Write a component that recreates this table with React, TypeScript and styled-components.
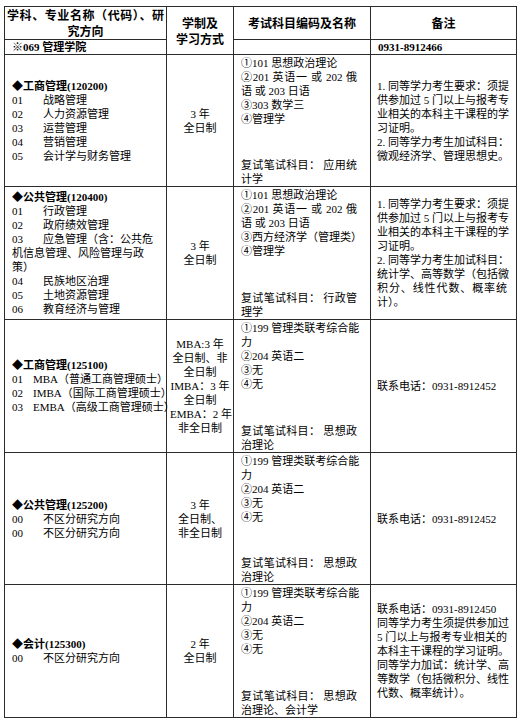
import React from 'react';
import styled, { createGlobalStyle } from 'styled-components';

const Global = createGlobalStyle`
  html, body { margin: 0; padding: 0; background: #fff; }
  body {
    font-family: "Liberation Serif", "Noto Sans CJK SC", serif;
    color: #000;
  }
`;

const Page = styled.div`
  padding: 6px 0 0 4px;
`;

const Table = styled.table`
  border-collapse: collapse;
  table-layout: fixed;
  width: 512px;
  font-size: 11px;
  line-height: 14px;
`;

const Row = styled.tr<{ $h: number }>`
  height: ${(p) => p.$h}px;
`;

const border = '1px solid #2b2b2b';

const HeadCell = styled.th`
  border: ${border};
  padding: 0 2px;
  font-size: 12px;
  line-height: 16px;
  font-weight: bold;
  text-align: center;
  vertical-align: middle;
  font-family: "Noto Sans CJK SC", sans-serif;
`;

const SubHeadCell = styled.td`
  border: ${border};
  padding: 0 6px 0 7px;
  font-weight: bold;
  font-size: 11px;
  line-height: 13px;
  vertical-align: middle;
  white-space: nowrap;
`;

const NameCell = styled.td`
  border: ${border};
  padding: 0 4px 0 7px;
  vertical-align: middle;
`;

const ModeCell = styled.td`
  border: ${border};
  padding: 0 3px;
  text-align: center;
  vertical-align: middle;
`;

const ExamCell = styled.td`
  border: ${border};
  padding: 0 13px 0 7px;
  vertical-align: top;
`;

const NoteCell = styled.td`
  border: ${border};
  padding: 0 9px 0 6px;
  vertical-align: middle;
`;

const ExamStack = styled.div<{ $h: number }>`
  height: ${(p) => p.$h}px;
  display: flex;
  flex-direction: column;
  justify-content: space-between;
  padding-top: 1px;
  box-sizing: border-box;
`;

const Line = styled.div<{ $j?: boolean }>`
  white-space: nowrap;
  text-align: left;
  text-align-last: ${(p) => (p.$j ? 'justify' : 'auto')};
`;

const HeadLine = styled.div<{ $j?: boolean }>`
  white-space: nowrap;
  text-align-last: ${(p) => (p.$j ? 'justify' : 'center')};
`;

const Title = styled.div`
  font-weight: bold;
  white-space: nowrap;
`;

const Entry = styled.div`
  white-space: nowrap;
`;

const Code = styled.span<{ $w: number }>`
  display: inline-block;
  width: ${(p) => p.$w}px;
`;

const CenterLine = styled.div`
  white-space: nowrap;
`;

type L = string | { t: string; j: true };
const J = (t: string): L => ({ t, j: true });

type Prog = {
  h: number;
  title: string;
  codeW: number;
  items: ([string, string] | string)[];
  mode: string[];
  top: L[];
  bottom: L[];
  note: L[];
};

const examA: L[] = ['①101 思想政治理论', J('②201 英语一 或 202 俄'), '语 或 203 日语'];
const examB: L[] = [J('①199 管理类联考综合能'), '力', '②204 英语二', '③无', '④无'];
const noteA: L[] = [
  J('1. 同等学力考生要求：须提'),
  J('供参加过 5 门以上与报考专'),
  J('业相关的本科主干课程的学'),
  '习证明。',
  '2. 同等学力考生加试科目：',
];

const progs: Prog[] = [
  {
    h: 132,
    title: '◆工商管理(120200)',
    codeW: 31,
    items: [
      ['01', '战略管理'],
      ['02', '人力资源管理'],
      ['03', '运营管理'],
      ['04', '营销管理'],
      ['05', '会计学与财务管理'],
    ],
    mode: ['3 年', '全日制'],
    top: [...examA, '③303 数学三', '④管理学'],
    bottom: [J('复试笔试科目：  应用统'), '计学'],
    note: [...noteA, '微观经济学、管理思想史。'],
  },
  {
    h: 133,
    title: '◆公共管理(120400)',
    codeW: 31,
    items: [
      ['01', '行政管理'],
      ['02', '政府绩效管理'],
      ['03', '应急管理（含：公共危'],
      '机信息管理、风险管理与政',
      '策）',
      ['04', '民族地区治理'],
      ['05', '土地资源管理'],
      ['06', '教育经济与管理'],
    ],
    mode: ['3 年', '全日制'],
    top: [...examA, '③西方经济学（管理类）', '④管理学'],
    bottom: [J('复试笔试科目：  行政管'), '理学'],
    note: [...noteA, J('统计学、高等数学（包括微'), J('积分、线性代数、概率统'), '计）。'],
  },
  {
    h: 133,
    title: '◆工商管理(125100)',
    codeW: 21,
    items: [
      ['01', 'MBA（普通工商管理硕士）'],
      ['02', 'IMBA（国际工商管理硕士）'],
      ['03', 'EMBA（高级工商管理硕士）'],
    ],
    mode: ['MBA:3 年', '全日制、非', '全日制', 'IMBA：3 年', '全日制', 'EMBA：2 年', '非全日制'],
    top: examB,
    bottom: [J('复试笔试科目：  思想政'), '治理论'],
    note: ['联系电话：0931-8912452'],
  },
  {
    h: 132,
    title: '◆公共管理(125200)',
    codeW: 31,
    items: [
      ['00', '不区分研究方向'],
      ['00', '不区分研究方向'],
    ],
    mode: ['3 年', '全日制、', '非全日制'],
    top: examB,
    bottom: [J('复试笔试科目：  思想政'), '治理论'],
    note: ['联系电话：0931-8912452'],
  },
  {
    h: 133,
    title: '◆会计(125300)',
    codeW: 31,
    items: [['00', '不区分研究方向']],
    mode: ['2 年', '全日制'],
    top: examB,
    bottom: [J('复试笔试科目：  思想政'), '治理论、会计学'],
    note: [
      '联系电话：0931-8912450',
      J('同等学力考生须提供参加过'),
      J('5 门以上与报考专业相关的'),
      J('本科主干课程的学习证明。'),
      J('同等学力加试：统计学、高'),
      J('等数学（包括微积分、线性'),
      '代数、概率统计）。',
    ],
  },
];

const renderLines = (lines: L[]) =>
  lines.map((l, i) =>
    typeof l === 'string' ? (
      <Line key={i}>{l}</Line>
    ) : (
      <Line key={i} $j>
        {l.t}
      </Line>
    )
  );

export default function App() {
  return (
    <>
      <Global />
      <Page>
        <Table>
          <colgroup>
            <col style={{ width: 162 }} />
            <col style={{ width: 67 }} />
            <col style={{ width: 137 }} />
            <col style={{ width: 146 }} />
          </colgroup>
          <thead>
            <Row $h={32}>
              <HeadCell>
                <HeadLine $j>学科、专业名称（代码）、研</HeadLine>
                <HeadLine>究方向</HeadLine>
              </HeadCell>
              <HeadCell rowSpan={2}>
                <HeadLine>学制及</HeadLine>
                <HeadLine>学习方式</HeadLine>
              </HeadCell>
              <HeadCell>考试科目编码及名称</HeadCell>
              <HeadCell>备注</HeadCell>
            </Row>
            <Row $h={15}>
              <SubHeadCell>※069 管理学院</SubHeadCell>
              <SubHeadCell />
              <SubHeadCell>0931-8912466</SubHeadCell>
            </Row>
          </thead>
          <tbody>
            {progs.map((p, i) => (
              <Row key={i} $h={p.h}>
                <NameCell>
                  <Title>{p.title}</Title>
                  {p.items.map((it, k) =>
                    typeof it === 'string' ? (
                      <Entry key={k}>{it}</Entry>
                    ) : (
                      <Entry key={k}>
                        <Code $w={p.codeW}>{it[0]}</Code>
                        {it[1]}
                      </Entry>
                    )
                  )}
                </NameCell>
                <ModeCell>
                  {p.mode.map((m, k) => (
                    <CenterLine key={k}>{m}</CenterLine>
                  ))}
                </ModeCell>
                <ExamCell>
                  <ExamStack $h={p.h - 1}>
                    <div>{renderLines(p.top)}</div>
                    <div>{renderLines(p.bottom)}</div>
                  </ExamStack>
                </ExamCell>
                <NoteCell>{renderLines(p.note)}</NoteCell>
              </Row>
            ))}
          </tbody>
        </Table>
      </Page>
    </>
  );
}
